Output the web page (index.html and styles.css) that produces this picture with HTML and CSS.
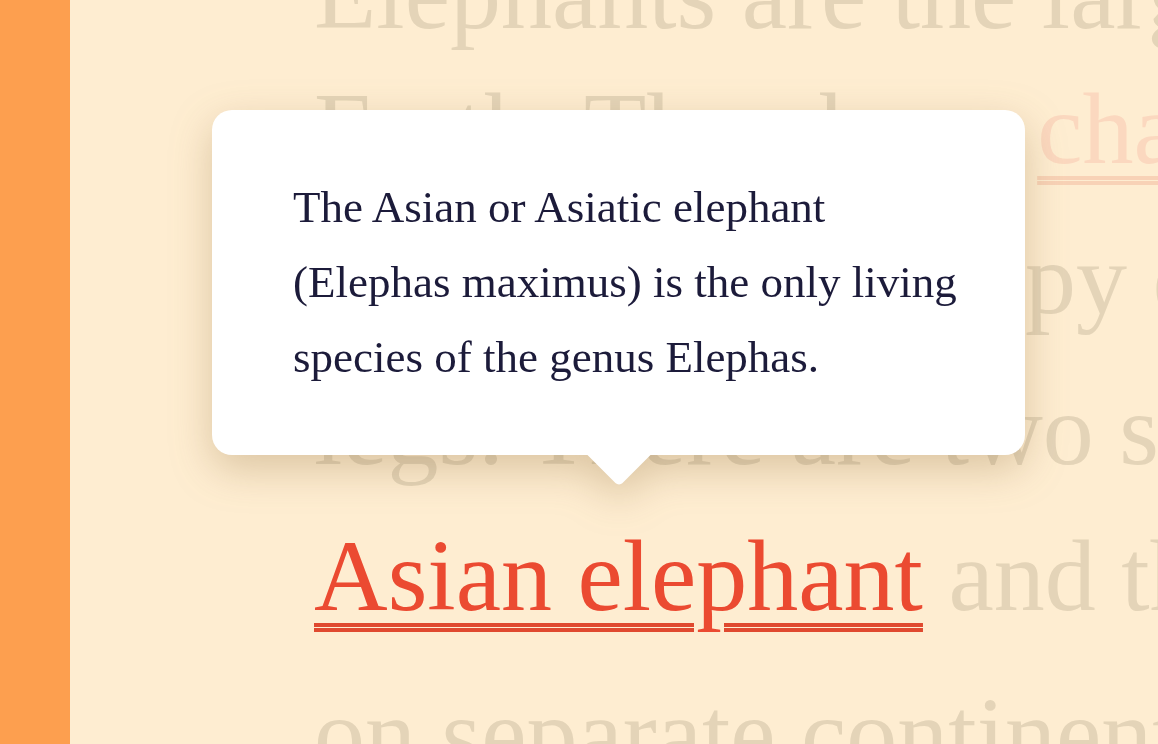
FILE: index.html
```html
<!DOCTYPE html>
<html lang="en">
<head>
<meta charset="utf-8">
<title>Elephants</title>
<link rel="stylesheet" href="styles.css">
</head>
<body>
<div class="page">
  <aside class="sidebar"></aside>
  <main class="article">
    <p class="prose">
      <span class="line line-1">Elephants are the largest land animals on</span>
      <span class="line line-2">Earth. They have <a class="link link-faded" href="#">characteristic</a> features</span>
      <span class="line line-3">burly trunks, floppy ears and thick</span>
      <span class="line line-4">legs. There are two species, the</span>
      <span class="line line-5"><a class="link link-active" href="#">Asian elephant</a> and the African elephant,</span>
      <span class="line line-6">on separate continents.</span>
    </p>
    <div class="tooltip">
      <div class="tooltip-box">
        <p class="tooltip-text">The Asian or Asiatic elephant<br>(Elephas maximus) is the only living<br>species of the genus Elephas.</p>
      </div>
      <div class="tooltip-arrow"></div>
    </div>
  </main>
</div>
</body>
</html>
```
FILE: styles.css
```css
html, body {
  margin: 0;
  padding: 0;
  height: 100%;
  overflow: hidden;
}

.page {
  display: flex;
  height: 744px;
  width: 1158px;
  overflow: hidden;
}

.sidebar {
  flex: 0 0 70px;
  background: #fd9f4f;
}

.article {
  flex: 1;
  position: relative;
  background: #feedd1;
  padding-left: 244px;
  overflow: hidden;
}

.prose {
  margin: -81px 0 0 0;
  font-family: "Liberation Serif", "Times New Roman", serif;
  font-size: 102px;
  line-height: 150px;
  color: #e4d4b8;
  white-space: nowrap;
}

.line {
  display: block;
}

.line-2 { margin-top: -15px; }
.line-4 { margin-top: 1px; }
.line-5 { margin-top: -4px; }
.line-6 { margin-top: 8px; }

.link {
  text-decoration-line: underline;
  text-decoration-style: double;
  text-decoration-thickness: 4px;
  text-underline-offset: 13px;
  text-decoration-skip-ink: auto;
}

.link-faded {
  color: #fbd8bf;
  text-decoration-color: #f8d2b6;
}

.link-active {
  color: #eb4a31;
  text-decoration-color: #e0492f;
}

.tooltip {
  position: absolute;
  left: 142px;
  top: 110px;
  width: 813px;
  display: flex;
  flex-direction: column;
  align-items: center;
  filter: drop-shadow(0 14px 20px rgba(130, 95, 40, 0.28));
}

.tooltip-box {
  box-sizing: border-box;
  width: 100%;
  height: 345px;
  background: #ffffff;
  border-radius: 20px;
  padding: 60px 40px 0 81px;
}

.tooltip-text {
  margin: 0;
  font-family: "Liberation Serif", "Times New Roman", serif;
  font-size: 45px;
  line-height: 75px;
  color: #1c1b3a;
  white-space: nowrap;
}

.tooltip-arrow {
  width: 46px;
  height: 46px;
  background: #ffffff;
  transform: rotate(45deg);
  border-bottom-right-radius: 5px;
  margin-top: -24px;
}
```
